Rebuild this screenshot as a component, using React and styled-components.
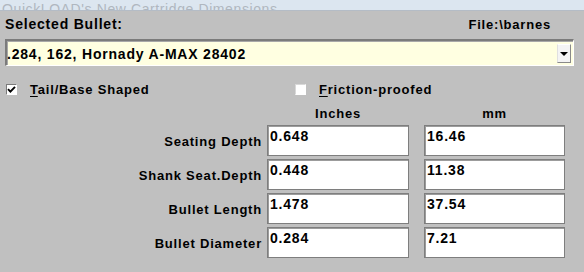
import React from "react";
import styled, { createGlobalStyle } from "styled-components";

const GlobalStyle = createGlobalStyle`
  html, body {
    margin: 0;
    padding: 0;
    background: #c0c0c0;
  }
  body {
    font-family: "Liberation Sans", Arial, sans-serif;
    font-weight: bold;
    color: #000000;
  }
`;

const Window = styled.div`
  width: 584px;
  height: 272px;
  overflow: hidden;
  background: #c0c0c0;
`;

const TitleStrip = styled.div`
  height: 10px;
  overflow: hidden;
  background: #dce6f0;
  border-bottom: 1px solid #b4bcc6;
  padding: 0 0 0 2px;
  display: flex;
  align-items: flex-end;
`;

const TitleText = styled.div`
  font-size: 14px;
  font-weight: normal;
  color: #b0b7bf;
  line-height: 14px;
  height: 14px;
  flex-shrink: 0;
  margin-bottom: -6px;
  letter-spacing: 0.6px;
  white-space: nowrap;
`;

const Body = styled.div`
  padding: 0 5px;
`;

const HeaderRow = styled.div`
  display: flex;
  justify-content: space-between;
  align-items: baseline;
  height: 16px;
  margin-top: 5px;
  font-size: 14px;
  line-height: 16px;
  letter-spacing: 0.8px;
`;

const FileName = styled.span`
  font-size: 13px;
  margin-right: 28px;
`;

const Combo = styled.div`
  margin-top: 7px;
  width: 569px;
  height: 27px;
  box-sizing: border-box;
  display: flex;
  align-items: center;
  justify-content: space-between;
  background: #ffffe1;
  border-top: 2px solid #7b7b7b;
  border-left: 2px solid #7b7b7b;
  border-right: 1px solid #ffffff;
  border-bottom: 1px solid #ffffff;
  box-shadow: inset 1px 1px 0 #a8a8a8;
`;

const ComboText = styled.span`
  font-size: 14px;
  letter-spacing: 0.8px;
  padding-left: 0;
  padding-top: 1px;
`;

const DropButton = styled.div`
  width: 14px;
  height: 19px;
  margin-right: 2px;
  box-sizing: border-box;
  display: flex;
  align-items: center;
  justify-content: center;
  background: #f4f4f4;
  border-top: 1px solid #ffffff;
  border-left: 1px solid #e0e0e0;
  border-right: 1px solid #8a8a8a;
  border-bottom: 1px solid #8a8a8a;
`;

const Arrow = styled.div`
  width: 0;
  height: 0;
  border-left: 4px solid transparent;
  border-right: 4px solid transparent;
  border-top: 4px solid #000000;
  margin-top: 1px;
`;

const OptionRow = styled.div`
  display: flex;
  margin-top: 15px;
  height: 16px;
  align-items: center;
`;

const Option = styled.label`
  display: flex;
  align-items: center;
  gap: 13px;
  width: ${(p) => p.$width}px;
  font-size: 13px;
  letter-spacing: 0.8px;
`;

const CheckBox = styled.span`
  width: 11px;
  height: 11px;
  box-sizing: border-box;
  display: flex;
  align-items: center;
  justify-content: center;
  background: #ffffff;
  border-top: 1px solid ${(p) => (p.$faded ? "#d8d8d8" : "#7a7a7a")};
  border-left: 1px solid ${(p) => (p.$faded ? "#d8d8d8" : "#7a7a7a")};
  border-right: 1px solid #ffffff;
  border-bottom: 1px solid #ffffff;
  margin-left: ${(p) => p.$offset}px;
`;

const Key = styled.span`
  text-decoration: underline;
  text-underline-offset: 2px;
`;

const Grid = styled.div`
  display: grid;
  grid-template-columns: 247px 142px 141px;
  column-gap: 15px;
  row-gap: 3px;
  margin-top: 10px;
  font-size: 13px;
  letter-spacing: 0.8px;
`;

const ColumnHead = styled.div`
  text-align: center;
  height: 18px;
  line-height: 14px;
  margin-bottom: -3px;
`;

const Label = styled.div`
  margin-right: -10px;
  display: flex;
  align-items: center;
  justify-content: flex-end;
  padding-top: 1px;
`;

const Field = styled.div`
  height: 31px;
  box-sizing: border-box;
  background: #ffffff;
  border: 1px solid #7e7e7e;
  box-shadow: inset 1px 1px 0 #9c9c9c;
  padding: 2px 0 0 2px;
  font-size: 14px;
  line-height: 16px;
`;

const rows = [
  { label: "Seating Depth", inches: "0.648", mm: "16.46" },
  { label: "Shank Seat.Depth", inches: "0.448", mm: "11.38" },
  { label: "Bullet Length", inches: "1.478", mm: "37.54" },
  { label: "Bullet Diameter", inches: "0.284", mm: "7.21" },
];

function CheckMark() {
  return (
    <svg width="9" height="9" viewBox="0 0 9 9">
      <path d="M1 4.2 L3.4 6.6 L8 1.8" fill="none" stroke="#000" strokeWidth="1.9" />
    </svg>
  );
}

export default function App() {
  return (
    <>
      <GlobalStyle />
      <Window>
        <TitleStrip>
          <TitleText>QuickLOAD's New Cartridge Dimensions</TitleText>
        </TitleStrip>
        <Body>
          <HeaderRow>
            <span>Selected Bullet:</span>
            <FileName>File:\barnes</FileName>
          </HeaderRow>
          <Combo>
            <ComboText>.284, 162, Hornady A-MAX 28402</ComboText>
            <DropButton>
              <Arrow />
            </DropButton>
          </Combo>
          <OptionRow>
            <Option $width={290}>
              <CheckBox $offset={1}>
                <CheckMark />
              </CheckBox>
              <span>
                <Key>T</Key>ail/Base Shaped
              </span>
            </Option>
            <Option $width={280}>
              <CheckBox $offset={0} $faded />
              <span>
                <Key>F</Key>riction-proofed
              </span>
            </Option>
          </OptionRow>
          <Grid>
            <div />
            <ColumnHead>Inches</ColumnHead>
            <ColumnHead>mm</ColumnHead>
            {rows.map((row) => (
              <React.Fragment key={row.label}>
                <Label>{row.label}</Label>
                <Field>{row.inches}</Field>
                <Field>{row.mm}</Field>
              </React.Fragment>
            ))}
          </Grid>
        </Body>
      </Window>
    </>
  );
}
